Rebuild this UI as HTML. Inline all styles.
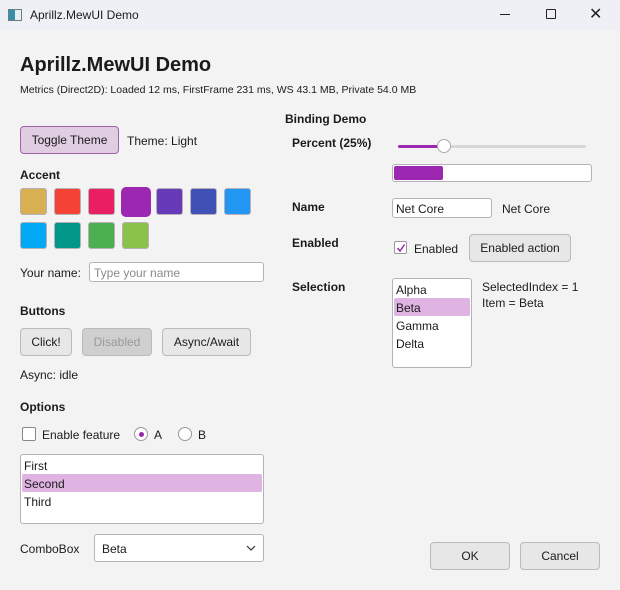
<!DOCTYPE html>
<html><head><meta charset="utf-8"><style>
*{box-sizing:border-box;margin:0;padding:0}
body{width:620px;height:590px;background:#f3f3f3;font-family:"Liberation Sans",sans-serif;font-size:12px;color:#1b1b1b;position:relative;overflow:hidden}
.a{position:absolute;white-space:nowrap}
.b{font-weight:bold}
.btn{position:absolute;background:#e7e7e7;border:1px solid #bdb8bf;border-radius:4px;text-align:center;font-size:12px}
.sw{position:absolute;width:27px;height:27px;border:1px solid #b8b0b8;border-radius:3px}
.box{position:absolute;background:#fff;border:1px solid #b9b0bb;border-radius:3px}
.sel{position:absolute;background:#dfb3e2;border-radius:2px}
</style></head><body>
<div class="a" style="left:0;top:0;width:620px;height:30px;background:#eff0f6"></div>
<div class="a" style="left:8px;top:9px;width:14px;height:12px;border:1px solid #6b7c8a;background:linear-gradient(90deg,#3a8fa8 50%,#e8eef2 50%)"></div>
<div class="a" style="left:30px;top:8px;font-size:12px">Aprillz.MewUI Demo</div>
<div class="a" style="left:500px;top:14px;width:10px;height:1px;background:#222"></div>
<div class="a" style="left:546px;top:9px;width:10px;height:10px;border:1px solid #222;border-radius:1px"></div>
<div class="a" style="left:589px;top:4px;font-size:16px;color:#222">✕</div>

<div class="a b" style="left:20px;top:54px;font-size:20px">Aprillz.MewUI Demo</div>
<div class="a" style="left:20px;top:84px;font-size:10.5px">Metrics (Direct2D): Loaded 12 ms, FirstFrame 231 ms, WS 43.1 MB, Private 54.0 MB</div>

<div class="btn" style="left:20px;top:126px;width:99px;height:28px;line-height:26px;background:#e0cde2;border-color:#a55fb0">Toggle Theme</div>
<div class="a" style="left:127px;top:134px">Theme: Light</div>

<div class="a b" style="left:20px;top:168px">Accent</div>
<div class="sw" style="left:20px;top:188px;background:#d8b052"></div>
<div class="sw" style="left:54px;top:188px;background:#f44336"></div>
<div class="sw" style="left:88px;top:188px;background:#e91e63"></div>
<div class="sw" style="left:121px;top:187px;width:30px;height:30px;border:none;border-radius:5px;background:#9c27b0"></div>
<div class="sw" style="left:156px;top:188px;background:#673ab7"></div>
<div class="sw" style="left:190px;top:188px;background:#3f51b5"></div>
<div class="sw" style="left:224px;top:188px;background:#2196f3"></div>
<div class="sw" style="left:20px;top:222px;background:#03a9f4"></div>
<div class="sw" style="left:54px;top:222px;background:#009688"></div>
<div class="sw" style="left:88px;top:222px;background:#4caf50"></div>
<div class="sw" style="left:122px;top:222px;background:#8bc34a"></div>

<div class="a" style="left:20px;top:266px">Your name:</div>
<div class="box" style="left:89px;top:262px;width:175px;height:20px"></div>
<div class="a" style="left:94px;top:266px;color:#8a8a8a">Type your name</div>

<div class="a b" style="left:20px;top:304px">Buttons</div>
<div class="btn" style="left:20px;top:328px;width:52px;height:28px;line-height:26px">Click!</div>
<div class="btn" style="left:82px;top:328px;width:70px;height:28px;line-height:26px;background:#cfcfcf;color:#9a9a9a">Disabled</div>
<div class="btn" style="left:162px;top:328px;width:89px;height:28px;line-height:26px">Async/Await</div>
<div class="a" style="left:20px;top:368px">Async: idle</div>

<div class="a b" style="left:20px;top:400px">Options</div>
<div class="a" style="left:22px;top:427px;width:14px;height:14px;border:1px solid #888;border-radius:2px;background:#fff"></div>
<div class="a" style="left:42px;top:428px">Enable feature</div>
<div class="a" style="left:134px;top:427px;width:14px;height:14px;border:1px solid #999;border-radius:50%;background:#fff"></div>
<div class="a" style="left:139px;top:432px;width:5px;height:5px;border-radius:50%;background:#9c27b0"></div>
<div class="a" style="left:154px;top:428px">A</div>
<div class="a" style="left:178px;top:427px;width:14px;height:14px;border:1px solid #999;border-radius:50%;background:#fff"></div>
<div class="a" style="left:198px;top:428px">B</div>

<div class="box" style="left:20px;top:454px;width:244px;height:70px"></div>
<div class="sel" style="left:22px;top:474px;width:240px;height:18px"></div>
<div class="a" style="left:24px;top:459px">First</div>
<div class="a" style="left:24px;top:477px">Second</div>
<div class="a" style="left:24px;top:495px">Third</div>

<div class="a" style="left:20px;top:542px">ComboBox</div>
<div class="box" style="left:94px;top:534px;width:170px;height:28px"></div>
<div class="a" style="left:102px;top:542px">Beta</div>
<svg class="a" style="left:246px;top:544px" width="10" height="8"><path d="M1 2 L5 6 L9 2" fill="none" stroke="#333" stroke-width="1.2"/></svg>

<div class="a b" style="left:285px;top:112px">Binding Demo</div>
<div class="a b" style="left:292px;top:136px">Percent (25%)</div>
<div class="a" style="left:398px;top:145px;width:188px;height:3px;background:#d8d8d8;border-radius:2px"></div>
<div class="a" style="left:398px;top:145px;width:46px;height:3px;background:#9c27b0;border-radius:2px"></div>
<div class="a" style="left:437px;top:139px;width:14px;height:14px;border-radius:50%;background:#fff;border:1px solid #aaa"></div>
<div class="box" style="left:392px;top:164px;width:200px;height:18px"></div>
<div class="a" style="left:394px;top:166px;width:49px;height:14px;background:#9c27b0;border-radius:2px"></div>

<div class="a b" style="left:292px;top:200px">Name</div>
<div class="box" style="left:392px;top:198px;width:100px;height:20px"></div>
<div class="a" style="left:396px;top:202px">Net Core</div>
<div class="a" style="left:502px;top:202px">Net Core</div>

<div class="a b" style="left:292px;top:236px">Enabled</div>
<div class="a" style="left:394px;top:241px;width:13px;height:13px;border:1px solid #999;border-radius:2px;background:#fff"></div>
<svg class="a" style="left:395px;top:242px" width="12" height="12"><path d="M2.5 6 L5 9 L9.5 2.5" fill="none" stroke="#9c27b0" stroke-width="1.5"/></svg>
<div class="a" style="left:414px;top:242px">Enabled</div>
<div class="btn" style="left:469px;top:234px;width:102px;height:28px;line-height:26px">Enabled action</div>

<div class="a b" style="left:292px;top:280px">Selection</div>
<div class="box" style="left:392px;top:278px;width:80px;height:90px"></div>
<div class="sel" style="left:394px;top:298px;width:76px;height:18px"></div>
<div class="a" style="left:396px;top:283px">Alpha</div>
<div class="a" style="left:396px;top:301px">Beta</div>
<div class="a" style="left:396px;top:319px">Gamma</div>
<div class="a" style="left:396px;top:337px">Delta</div>
<div class="a" style="left:482px;top:280px">SelectedIndex = 1</div>
<div class="a" style="left:482px;top:296px">Item = Beta</div>

<div class="btn" style="left:430px;top:542px;width:80px;height:28px;line-height:26px">OK</div>
<div class="btn" style="left:520px;top:542px;width:80px;height:28px;line-height:26px">Cancel</div>
</body></html>
